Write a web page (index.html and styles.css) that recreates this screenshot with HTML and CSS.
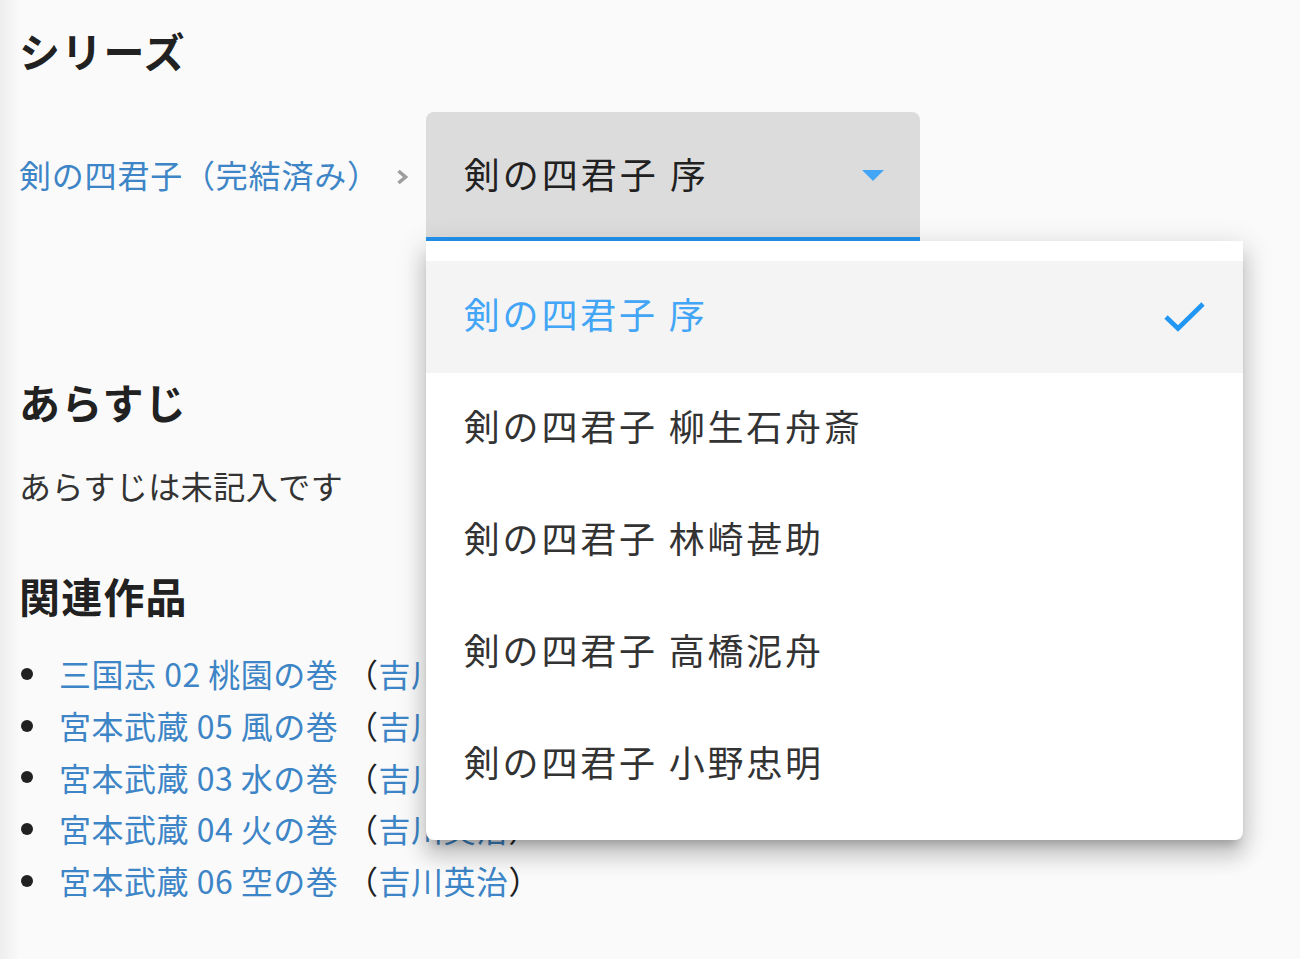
FILE: index.html
```html
<!DOCTYPE html>
<html lang="ja">
<head>
<meta charset="utf-8">
<title>シリーズ</title>
<link rel="stylesheet" href="styles.css">
</head>
<body>
<main class="page">
  <h2 class="heading">シリーズ</h2>
  <div class="series-row">
    <nav class="crumbs">
      <a class="link crumb" href="#">剣の四君子（完結済み）</a>
      <svg class="chev" viewBox="0 0 12 16"><polyline points="2.5,2 9.5,8 2.5,14" fill="none" stroke="#9e9e9e" stroke-width="3.6"/></svg>
    </nav>
    <div class="select">
      <div class="field">
        <span class="field-text">剣の四君子 序</span>
        <svg class="caret" viewBox="0 0 22 11"><polygon points="0,0 22,0 11,11" fill="#42a5f5"/></svg>
      </div>
      <ul class="menu">
        <li class="menu-item active"><span>剣の四君子 序</span><svg class="check" viewBox="0 0 44 34"><polyline points="3,16 15,27.5 40,3" fill="none" stroke="#2196f3" stroke-width="4.6"/></svg></li>
        <li class="menu-item"><span>剣の四君子 柳生石舟斎</span></li>
        <li class="menu-item"><span>剣の四君子 林崎甚助</span></li>
        <li class="menu-item"><span>剣の四君子 高橋泥舟</span></li>
        <li class="menu-item"><span>剣の四君子 小野忠明</span></li>
      </ul>
    </div>
  </div>
  <h2 class="heading synopsis-h">あらすじ</h2>
  <p class="synopsis">あらすじは未記入です</p>
  <h2 class="heading related-h">関連作品</h2>
  <ul class="related">
    <li><a class="link" href="#">三国志 02 桃園の巻</a>&nbsp;（<a class="link" href="#">吉川英治</a>）</li>
    <li><a class="link" href="#">宮本武蔵 05 風の巻</a>&nbsp;（<a class="link" href="#">吉川英治</a>）</li>
    <li><a class="link" href="#">宮本武蔵 03 水の巻</a>&nbsp;（<a class="link" href="#">吉川英治</a>）</li>
    <li><a class="link" href="#">宮本武蔵 04 火の巻</a>&nbsp;（<a class="link" href="#">吉川英治</a>）</li>
    <li><a class="link" href="#">宮本武蔵 06 空の巻</a>&nbsp;（<a class="link" href="#">吉川英治</a>）</li>
  </ul>
</main>
</body>
</html>
```

FILE: styles.css
```css
* { box-sizing: border-box; }
html, body { margin: 0; }
body {
  min-height: 959px;
  background: linear-gradient(to right, rgba(0,0,0,0.05), rgba(0,0,0,0) 20px), #fafafa;
  font-family: "Noto Sans CJK JP", "Noto Sans", sans-serif;
  color: #212121;
}
.page { padding: 26px 20px 0 19px; }
.heading {
  margin: 0;
  font-size: 41px;
  line-height: 48px;
  font-weight: 700;
  letter-spacing: 1.2px;
  color: #212121;
}
.series-row {
  display: flex;
  align-items: center;
  margin-top: 38px;
}
.crumbs { display: flex; align-items: center; }
.link { color: #3d85c6; text-decoration: none; }
.crumb {
  display: inline-block;
  font-size: 32px;
  line-height: 48px;
  letter-spacing: 0.8px;
  padding-bottom: 6px;
}
.chev { width: 12px; height: 16px; margin-left: 16px; margin-right: 18px; }
.select { position: relative; width: 494px; flex: none; }
.field {
  height: 129px;
  background: #dcdcdc;
  border-radius: 8px 8px 0 0;
  border-bottom: 4px solid #2393ef;
  display: flex;
  align-items: center;
  justify-content: space-between;
  padding: 0 36px 4px 38px;
}
.field-text { font-size: 36px; letter-spacing: 3px; color: #212121; }
.caret { width: 22px; height: 11px; margin-top: 6px; }
.menu {
  position: absolute;
  top: 100%;
  left: 0;
  width: 817px;
  margin: 0;
  padding: 20px 0 19px;
  list-style: none;
  background: #fff;
  border-radius: 0 0 8px 8px;
  box-shadow: 0 10px 10px -6px rgba(0,0,0,.2), 0 16px 20px 2px rgba(0,0,0,.14), 0 6px 28px 4px rgba(0,0,0,.12);
  z-index: 10;
}
.menu-item {
  height: 112px;
  display: flex;
  align-items: center;
  justify-content: space-between;
  padding: 0 36px 8px 38px;
  font-size: 36px;
  letter-spacing: 2.8px;
  color: #333;
}
.menu-item.active { background: #f4f4f4; color: #42a5f5; }
.check { width: 44px; height: 34px; margin-top: 10px; }
.synopsis-h { margin-top: 136px; }
.synopsis { margin: 36px 0 0; font-size: 32px; line-height: 48px; letter-spacing: 0.5px; color: #333; }
.related-h { margin-top: 62px; }
.related { list-style: none; margin: 29px 0 0; padding: 0; }
.related li {
  display: flex;
  align-items: center;
  font-size: 32px;
  line-height: 51.8px;
  letter-spacing: 0.5px;
  color: #212121;
}
.related li::before {
  content: "";
  flex: none;
  width: 12px;
  height: 12px;
  border-radius: 50%;
  background: #212121;
  margin: 0 26px 0 2px;
}
```
